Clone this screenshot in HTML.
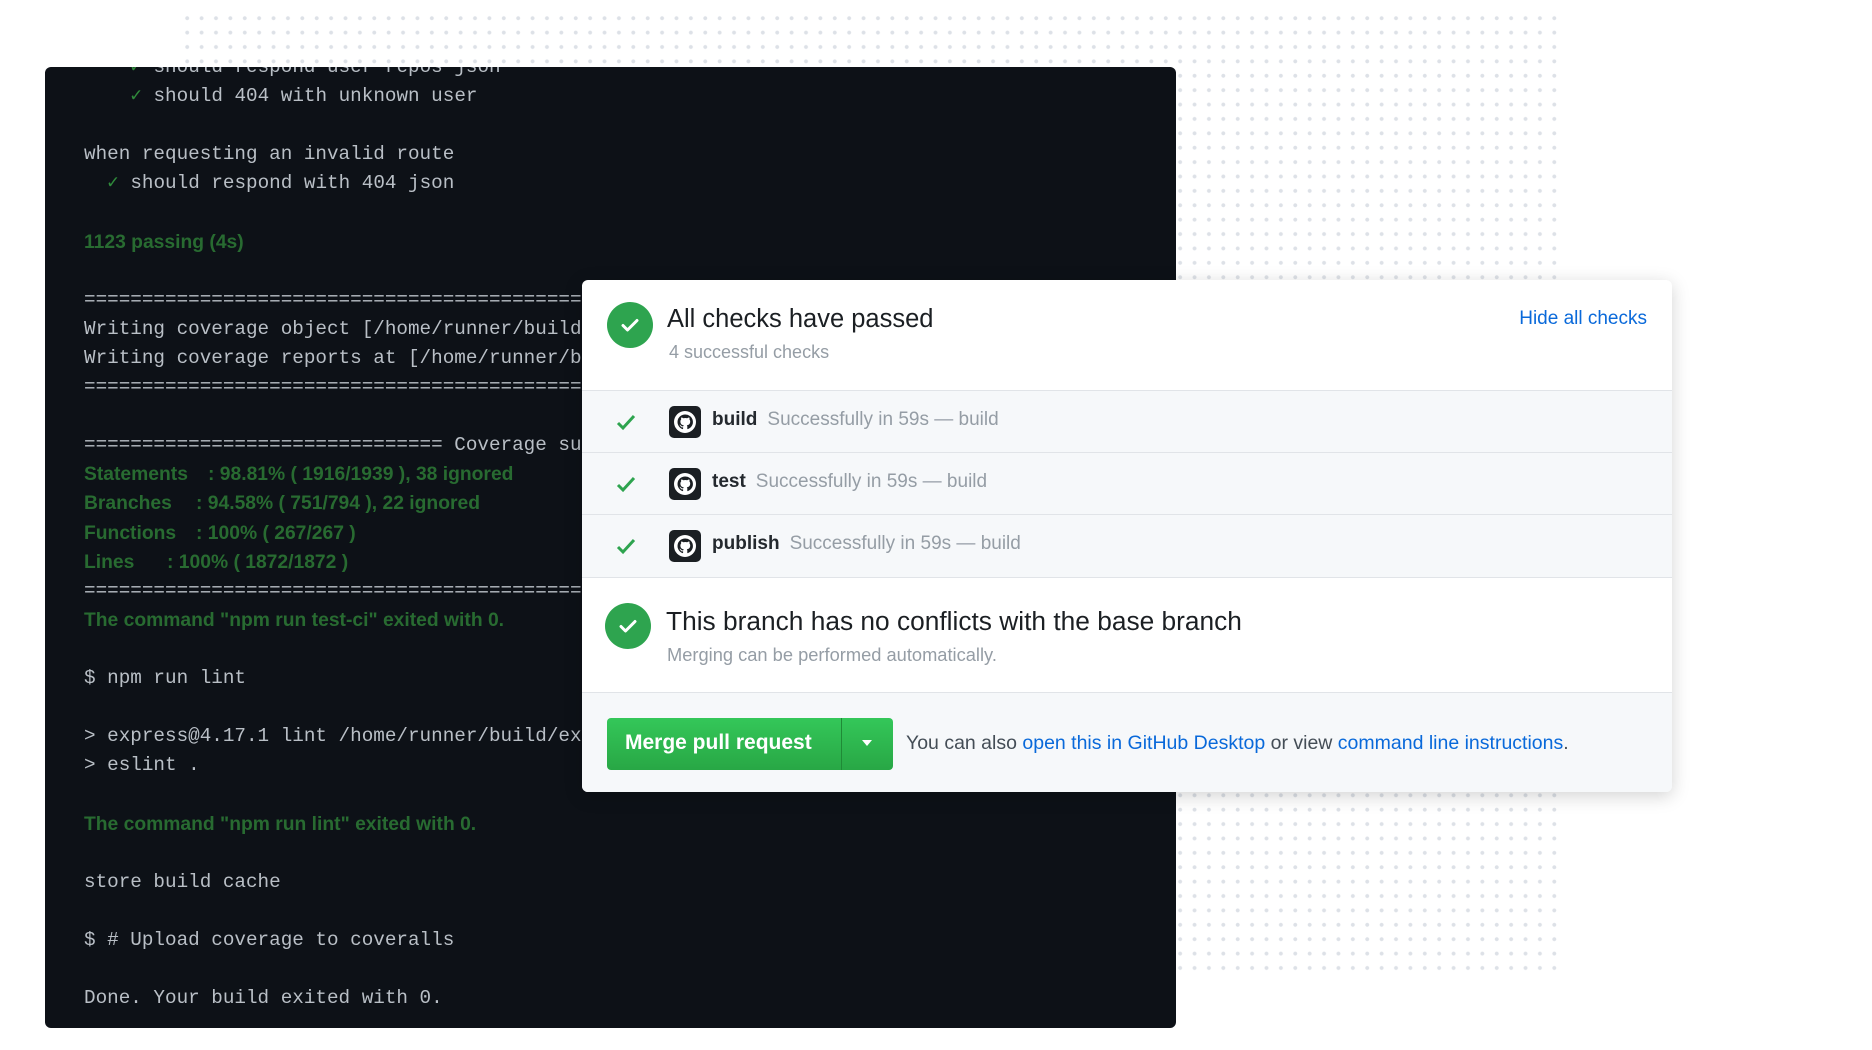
<!DOCTYPE html>
<html><head><meta charset="utf-8"><style>
*{margin:0;padding:0;box-sizing:border-box}
body{width:1872px;height:1050px;background:#fff;position:relative;overflow:hidden;font-family:"Liberation Sans",sans-serif}
.dots{position:absolute;left:180px;top:11px;width:1382px;height:965px;background-image:radial-gradient(circle,#dde1e7 1.7px,transparent 2.2px);background-size:14.4px 14.4px}
.term{position:absolute;left:45px;top:67px;width:1131px;height:961px;background:#0d1117;border-radius:6px;overflow:hidden}
.ln{position:absolute;left:39px;height:29px;line-height:29px;font-family:"Liberation Mono",monospace;font-size:19.3px;color:#b9bfc6;white-space:pre}
.g{font-family:"Liberation Sans",sans-serif;font-weight:bold;color:#286b31;font-size:19.3px}
.ck{color:#2f8a3b}
.card{position:absolute;left:586px;top:280px;width:1097px;height:512px;background:#fff;border-radius:6px;box-shadow:0 4px 18px rgba(0,0,0,.18);overflow:hidden}
.circ{position:absolute;width:46px;height:46px;border-radius:50%;background:#2ea44f}
.circ svg{position:absolute;left:12px;top:12px}
.row{position:absolute;left:0;width:1097px;background:#f6f8fa;border-top:1px solid #e1e4e8}
.row .c{position:absolute;left:33px}
.row .ic{position:absolute;left:87px;width:32px;height:32px;background:#1b1f23;border-radius:5px}
.row .t{position:absolute;left:130px;font-size:19px;color:#24292e;font-weight:bold;white-space:nowrap}
.row .t span{font-weight:normal;color:#959da5;margin-left:10px}
a{color:#0969da;text-decoration:none}
</style></head><body>
<div class="dots"></div>
<div class="term">
<div class="ln" style="top:-14px">    <span class="ck">✓</span> should respond user repos json</div>
<div class="ln" style="top:15px">    <span class="ck">✓</span> should 404 with unknown user</div>
<div class="ln" style="top:73px">when requesting an invalid route</div>
<div class="ln" style="top:102px">  <span class="ck">✓</span> should respond with 404 json</div>
<div class="ln g" style="top:161px">1123 passing (4s)</div>
<div class="ln" style="top:219px">======================================================================</div>
<div class="ln" style="top:248px">Writing coverage object [/home/runner/build/coverage/coverage.json]</div>
<div class="ln" style="top:277px">Writing coverage reports at [/home/runner/build/coverage]</div>
<div class="ln" style="top:306px">======================================================================</div>
<div class="ln" style="top:364px">=============================== Coverage summary</div>
<div class="ln g" style="top:393px">Statements<span style="position:absolute;left:124px">: 98.81% ( 1916/1939 ), 38 ignored</span></div>
<div class="ln g" style="top:422px">Branches<span style="position:absolute;left:112px">: 94.58% ( 751/794 ), 22 ignored</span></div>
<div class="ln g" style="top:452px">Functions<span style="position:absolute;left:112px">: 100% ( 267/267 )</span></div>
<div class="ln g" style="top:481px">Lines<span style="position:absolute;left:83px">: 100% ( 1872/1872 )</span></div>
<div class="ln" style="top:510px">======================================================================</div>
<div class="ln g" style="top:539px">The command "npm run test-ci" exited with 0.</div>
<div class="ln" style="top:597px">$ npm run lint</div>
<div class="ln" style="top:655px">&gt; express@4.17.1 lint /home/runner/build/express</div>
<div class="ln" style="top:684px">&gt; eslint .</div>
<div class="ln g" style="top:743px">The command "npm run lint" exited with 0.</div>
<div class="ln" style="top:801px">store build cache</div>
<div class="ln" style="top:859px">$ # Upload coverage to coveralls</div>
<div class="ln" style="top:917px">Done. Your build exited with 0.</div>
</div>

<div class="card" style="left:582px;width:1090px">
 <div class="circ" style="left:25px;top:22px"><svg width="22" height="22" viewBox="0 0 22 22"><path d="M4 11.5l4.5 4.5L18 6.5" stroke="#fff" stroke-width="3" fill="none" stroke-linecap="round" stroke-linejoin="round"/></svg></div>
 <div style="position:absolute;left:85px;top:25px;font-size:25.5px;color:#1b1f23">All checks have passed</div>
 <div style="position:absolute;left:87px;top:62px;font-size:18px;color:#959da5">4 successful checks</div>
 <div style="position:absolute;right:25px;top:28px;font-size:19px;color:#0969da">Hide all checks</div>

 <div class="row" style="top:110px;height:62px">
  <svg class="c" style="top:20px" width="22" height="22" viewBox="0 0 22 22"><path d="M3 12l5 5L19 5" stroke="#2ea44f" stroke-width="3" fill="none"/></svg>
  <div class="ic" style="top:15px"><svg width="32" height="32" viewBox="0 0 32 32"><circle cx="16" cy="16" r="11" fill="#fff"/><path d="M16 8.5a7.5 7.5 0 0 0-2.4 14.6c.4 0 .5-.2.5-.4v-1.4c-2.1.5-2.5-.9-2.5-.9-.3-.9-.8-1.1-.8-1.1-.7-.5.1-.5.1-.5.8.1 1.2.8 1.2.8.7 1.2 1.8.8 2.2.6.1-.5.3-.8.5-1-1.7-.2-3.4-.8-3.4-3.7 0-.8.3-1.5.8-2-.1-.2-.3-1 .1-2 0 0 .6-.2 2.1.8a7 7 0 0 1 3.8 0c1.4-1 2.1-.8 2.1-.8.4 1 .2 1.8.1 2 .5.5.8 1.2.8 2 0 2.9-1.8 3.5-3.4 3.7.3.2.5.7.5 1.4v2.1c0 .2.1.4.5.4A7.5 7.5 0 0 0 16 8.5z" fill="#1b1f23"/></svg></div>
  <div class="t" style="top:18px">build<span>Successfully in 59s — build</span></div>
 </div>
 <div class="row" style="top:172px;height:62px">
  <svg class="c" style="top:20px" width="22" height="22" viewBox="0 0 22 22"><path d="M3 12l5 5L19 5" stroke="#2ea44f" stroke-width="3" fill="none"/></svg>
  <div class="ic" style="top:15px"><svg width="32" height="32" viewBox="0 0 32 32"><circle cx="16" cy="16" r="11" fill="#fff"/><path d="M16 8.5a7.5 7.5 0 0 0-2.4 14.6c.4 0 .5-.2.5-.4v-1.4c-2.1.5-2.5-.9-2.5-.9-.3-.9-.8-1.1-.8-1.1-.7-.5.1-.5.1-.5.8.1 1.2.8 1.2.8.7 1.2 1.8.8 2.2.6.1-.5.3-.8.5-1-1.7-.2-3.4-.8-3.4-3.7 0-.8.3-1.5.8-2-.1-.2-.3-1 .1-2 0 0 .6-.2 2.1.8a7 7 0 0 1 3.8 0c1.4-1 2.1-.8 2.1-.8.4 1 .2 1.8.1 2 .5.5.8 1.2.8 2 0 2.9-1.8 3.5-3.4 3.7.3.2.5.7.5 1.4v2.1c0 .2.1.4.5.4A7.5 7.5 0 0 0 16 8.5z" fill="#1b1f23"/></svg></div>
  <div class="t" style="top:18px">test<span>Successfully in 59s — build</span></div>
 </div>
 <div class="row" style="top:234px;height:63px">
  <svg class="c" style="top:20px" width="22" height="22" viewBox="0 0 22 22"><path d="M3 12l5 5L19 5" stroke="#2ea44f" stroke-width="3" fill="none"/></svg>
  <div class="ic" style="top:15px"><svg width="32" height="32" viewBox="0 0 32 32"><circle cx="16" cy="16" r="11" fill="#fff"/><path d="M16 8.5a7.5 7.5 0 0 0-2.4 14.6c.4 0 .5-.2.5-.4v-1.4c-2.1.5-2.5-.9-2.5-.9-.3-.9-.8-1.1-.8-1.1-.7-.5.1-.5.1-.5.8.1 1.2.8 1.2.8.7 1.2 1.8.8 2.2.6.1-.5.3-.8.5-1-1.7-.2-3.4-.8-3.4-3.7 0-.8.3-1.5.8-2-.1-.2-.3-1 .1-2 0 0 .6-.2 2.1.8a7 7 0 0 1 3.8 0c1.4-1 2.1-.8 2.1-.8.4 1 .2 1.8.1 2 .5.5.8 1.2.8 2 0 2.9-1.8 3.5-3.4 3.7.3.2.5.7.5 1.4v2.1c0 .2.1.4.5.4A7.5 7.5 0 0 0 16 8.5z" fill="#1b1f23"/></svg></div>
  <div class="t" style="top:18px">publish<span>Successfully in 59s — build</span></div>
 </div>
 <div style="position:absolute;left:0;top:297px;width:1097px;height:1px;background:#e1e4e8"></div>

 <div class="circ" style="left:23px;top:323px"><svg width="22" height="22" viewBox="0 0 22 22"><path d="M4 11.5l4.5 4.5L18 6.5" stroke="#fff" stroke-width="3" fill="none" stroke-linecap="round" stroke-linejoin="round"/></svg></div>
 <div style="position:absolute;left:84px;top:326px;font-size:26.3px;color:#1b1f23">This branch has no conflicts with the base branch</div>
 <div style="position:absolute;left:85px;top:364px;font-size:18.3px;color:#959da5">Merging can be performed automatically.</div>

 <div style="position:absolute;left:0;top:412px;width:1097px;height:100px;background:#f6f8fa;border-top:1px solid #e1e4e8">
  <div style="position:absolute;left:25px;top:25px;width:286px;height:52px;border-radius:4px;background:linear-gradient(#34c759,#28a745);color:#fff;font-weight:bold;font-size:21px">
   <div style="position:absolute;left:18px;top:13px">Merge pull request</div>
   <div style="position:absolute;left:234px;top:0;width:1px;height:52px;background:#1f8a36"></div>
   <div style="position:absolute;left:255px;top:22px;width:0;height:0;border-left:5px solid transparent;border-right:5px solid transparent;border-top:6px solid #fff"></div>
  </div>
  <div style="position:absolute;left:324px;top:39px;font-size:19.5px;color:#444d56;white-space:nowrap">You can also <a>open this in GitHub Desktop</a> or view <a>command line instructions</a>.</div>
 </div>
</div>
</body></html>
